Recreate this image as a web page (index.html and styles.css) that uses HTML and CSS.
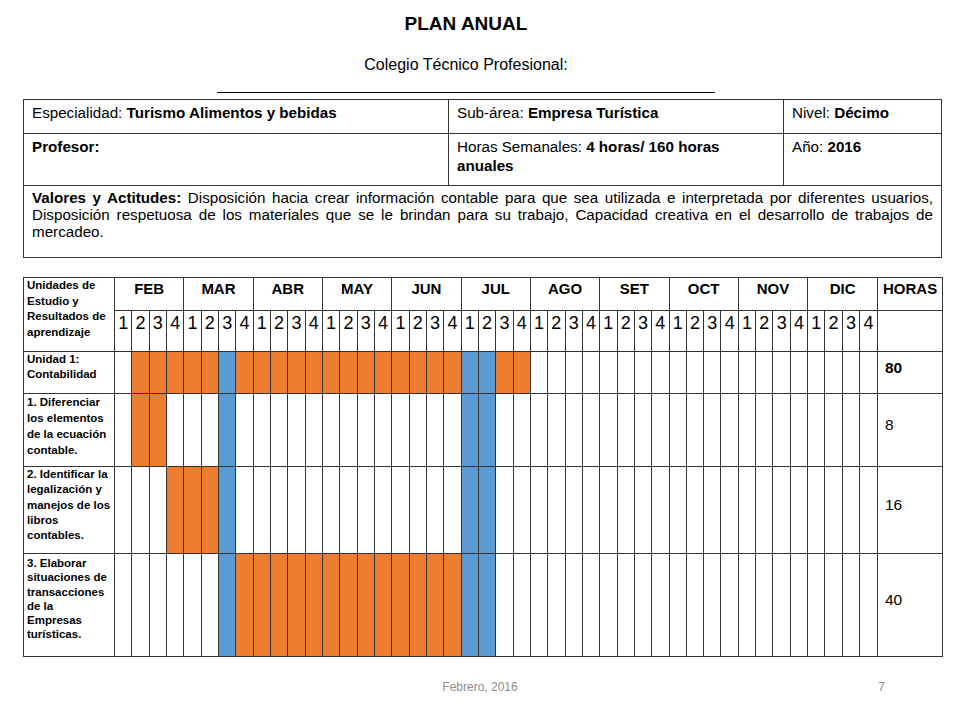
FILE: index.html
```html
<!DOCTYPE html>
<html lang="es">
<head>
<meta charset="utf-8">
<title>Plan Anual</title>
<link rel="stylesheet" href="styles.css">
</head>
<body>
<div class="header">
  <h1 class="title">PLAN ANUAL</h1>
  <p class="school">Colegio Técnico Profesional:</p>
  <div class="rule"></div>
</div>

<table class="info">
  <colgroup><col class="c1"><col class="c2"><col class="c3"></colgroup>
  <tr class="r1">
    <td>Especialidad: <b>Turismo Alimentos y bebidas</b></td>
    <td>Sub-área: <b>Empresa Turística</b></td>
    <td>Nivel: <b>Décimo</b></td>
  </tr>
  <tr class="r2">
    <td><b>Profesor:</b></td>
    <td>Horas Semanales: <b>4 horas/ 160 horas anuales</b></td>
    <td>Año: <b>2016</b></td>
  </tr>
  <tr class="r3">
    <td colspan="3" class="values"><b>Valores y Actitudes:</b> Disposición hacia crear información contable para que sea utilizada e interpretada por diferentes usuarios, Disposición respetuosa de los materiales que se le brindan para su trabajo, Capacidad creativa en el desarrollo de trabajos de mercadeo.</td>
  </tr>
</table>

<table class="gantt">
  <colgroup><col class="lbl"><col span="44"><col class="hrs"></colgroup>
  <tr class="months">
    <td rowspan="2" class="label">Unidades de<br>Estudio y<br>Resultados de<br>aprendizaje</td>
    <td colspan="4" class="month">FEB</td>
    <td colspan="4" class="month">MAR</td>
    <td colspan="4" class="month">ABR</td>
    <td colspan="4" class="month">MAY</td>
    <td colspan="4" class="month">JUN</td>
    <td colspan="4" class="month">JUL</td>
    <td colspan="4" class="month">AGO</td>
    <td colspan="4" class="month">SET</td>
    <td colspan="4" class="month">OCT</td>
    <td colspan="4" class="month">NOV</td>
    <td colspan="4" class="month">DIC</td>
    <td class="month horas">HORAS</td>
  </tr>
  <tr class="weeks">
    <td>1</td><td>2</td><td>3</td><td>4</td>
    <td>1</td><td>2</td><td>3</td><td>4</td>
    <td>1</td><td>2</td><td>3</td><td>4</td>
    <td>1</td><td>2</td><td>3</td><td>4</td>
    <td>1</td><td>2</td><td>3</td><td>4</td>
    <td>1</td><td>2</td><td>3</td><td>4</td>
    <td>1</td><td>2</td><td>3</td><td>4</td>
    <td>1</td><td>2</td><td>3</td><td>4</td>
    <td>1</td><td>2</td><td>3</td><td>4</td>
    <td>1</td><td>2</td><td>3</td><td>4</td>
    <td>1</td><td>2</td><td>3</td><td>4</td>
    <td class="empty"></td>
  </tr>
  <tr class="u1">
    <td class="label">Unidad 1:<br>Contabilidad</td>
    <td></td><td class="o"></td><td class="o"></td><td class="o"></td>
    <td class="o"></td><td class="o"></td><td class="b"></td><td class="o"></td>
    <td class="o"></td><td class="o"></td><td class="o"></td><td class="o"></td>
    <td class="o"></td><td class="o"></td><td class="o"></td><td class="o"></td>
    <td class="o"></td><td class="o"></td><td class="o"></td><td class="o"></td>
    <td class="b"></td><td class="b"></td><td class="o"></td><td class="o"></td>
    <td></td><td></td><td></td><td></td>
    <td></td><td></td><td></td><td></td>
    <td></td><td></td><td></td><td></td>
    <td></td><td></td><td></td><td></td>
    <td></td><td></td><td></td><td></td>
    <td class="hval strong">80</td>
  </tr>
  <tr class="ra">
    <td class="label">1. Diferenciar<br>los elementos<br>de la ecuación<br>contable.</td>
    <td></td><td class="o"></td><td class="o"></td><td></td>
    <td></td><td></td><td class="b"></td><td></td>
    <td></td><td></td><td></td><td></td>
    <td></td><td></td><td></td><td></td>
    <td></td><td></td><td></td><td></td>
    <td class="b"></td><td class="b"></td><td></td><td></td>
    <td></td><td></td><td></td><td></td>
    <td></td><td></td><td></td><td></td>
    <td></td><td></td><td></td><td></td>
    <td></td><td></td><td></td><td></td>
    <td></td><td></td><td></td><td></td>
    <td class="hval">8</td>
  </tr>
  <tr class="rb">
    <td class="label">2. Identificar la<br>legalización y<br>manejos de los<br>libros<br>contables.</td>
    <td></td><td></td><td></td><td class="o"></td>
    <td class="o"></td><td class="o"></td><td class="b"></td><td></td>
    <td></td><td></td><td></td><td></td>
    <td></td><td></td><td></td><td></td>
    <td></td><td></td><td></td><td></td>
    <td class="b"></td><td class="b"></td><td></td><td></td>
    <td></td><td></td><td></td><td></td>
    <td></td><td></td><td></td><td></td>
    <td></td><td></td><td></td><td></td>
    <td></td><td></td><td></td><td></td>
    <td></td><td></td><td></td><td></td>
    <td class="hval">16</td>
  </tr>
  <tr class="rc">
    <td class="label">3. Elaborar<br>situaciones de<br>transacciones<br>de la<br>Empresas<br>turísticas.</td>
    <td></td><td></td><td></td><td></td>
    <td></td><td></td><td class="b"></td><td class="o"></td>
    <td class="o"></td><td class="o"></td><td class="o"></td><td class="o"></td>
    <td class="o"></td><td class="o"></td><td class="o"></td><td class="o"></td>
    <td class="o"></td><td class="o"></td><td class="o"></td><td class="o"></td>
    <td class="b"></td><td class="b"></td><td></td><td></td>
    <td></td><td></td><td></td><td></td>
    <td></td><td></td><td></td><td></td>
    <td></td><td></td><td></td><td></td>
    <td></td><td></td><td></td><td></td>
    <td></td><td></td><td></td><td></td>
    <td class="hval">40</td>
  </tr>
</table>

<div class="footer">
  <span class="f-left"></span>
  <span class="f-date">Febrero, 2016</span>
  <span class="f-num">7</span>
</div>
</body>
</html>
```

FILE: styles.css
```css
html, body {
  margin: 0;
  padding: 0;
  background: #fff;
}
body {
  width: 960px;
  height: 720px;
  overflow: hidden;
  font-family: "Liberation Sans", Arial, sans-serif;
  color: #000;
}

.header {
  padding-right: 28px;
  text-align: center;
}
.title {
  margin: 0;
  padding-top: 13px;
  font-size: 19px;
  line-height: 22px;
  font-weight: bold;
}
.school {
  margin: 22px 0 0;
  font-size: 16px;
  line-height: 16px;
}
.rule {
  width: 498px;
  height: 0;
  border-top: 1px solid #000;
  margin: 19px auto 0;
}

/* info table */
.info {
  margin: 6px 0 0 23px;
  width: 919px;
  border-collapse: collapse;
  table-layout: fixed;
  font-size: 15.2px;
  line-height: 17px;
}
.info .c1 { width: 425px; }
.info .c2 { width: 335px; }
.info .c3 { width: 158px; }
.info td {
  border: 1px solid #333;
  vertical-align: top;
  padding: 4px 8px 0;
}
.info .r1 td { height: 29px; }
.info .r2 td {
  height: 48px;
  line-height: 19px;
  padding-top: 3px;
}
.info .r3 td { height: 68px; }
.info .values {
  text-align: justify;
  line-height: 17px;
  padding-top: 3px;
}

/* gantt table */
.gantt {
  margin: 19px 0 0 23px;
  width: 920px;
  border-collapse: collapse;
  table-layout: fixed;
}
.gantt .lbl { width: 91px; }
.gantt .hrs { width: 65px; }
.gantt td {
  border: 1px solid #333;
  padding: 0;
  vertical-align: top;
}
.gantt .months td { height: 30px; }
.gantt .month {
  font-size: 15px;
  line-height: 18px;
  font-weight: bold;
  text-align: center;
  padding-top: 2px;
}
.gantt .horas { padding-left: 5px; text-align: left; }
.gantt .weeks td {
  height: 38px;
  font-size: 18px;
  line-height: 20px;
  text-align: center;
  padding-top: 2px;
}
.gantt .u1 td { height: 41px; }
.gantt .ra td { height: 72px; }
.gantt .rb td { height: 86px; }
.gantt .rc td { height: 102px; }

.gantt td.label,
.gantt td.hval {
  height: auto;
}
.gantt .label {
  font-size: 11.5px;
  line-height: 15.5px;
  font-weight: bold;
  padding: 0 2px 0 3px;
  white-space: nowrap;
  overflow: hidden;
}
.gantt .u1 .label { line-height: 15px; }
.gantt .ra .label { line-height: 16px; }
.gantt .rb .label { line-height: 15.3px; }
.gantt .rc .label { line-height: 14.3px; padding-top: 2px; }

.gantt .o { background: #ed7d31; }
.gantt .b { background: #5b9bd5; }
.gantt .hval {
  vertical-align: middle;
  font-size: 15.5px;
  line-height: 18px;
  padding: 0 0 10px 7px;
}
.gantt .strong { font-weight: bold; }

/* footer */
.footer {
  display: grid;
  grid-template-columns: 1fr auto 1fr;
  margin-top: 23px;
  font-size: 12px;
  line-height: 14px;
  color: #8c8c8c;
}
.f-num {
  text-align: right;
  padding-right: 75px;
}
```
